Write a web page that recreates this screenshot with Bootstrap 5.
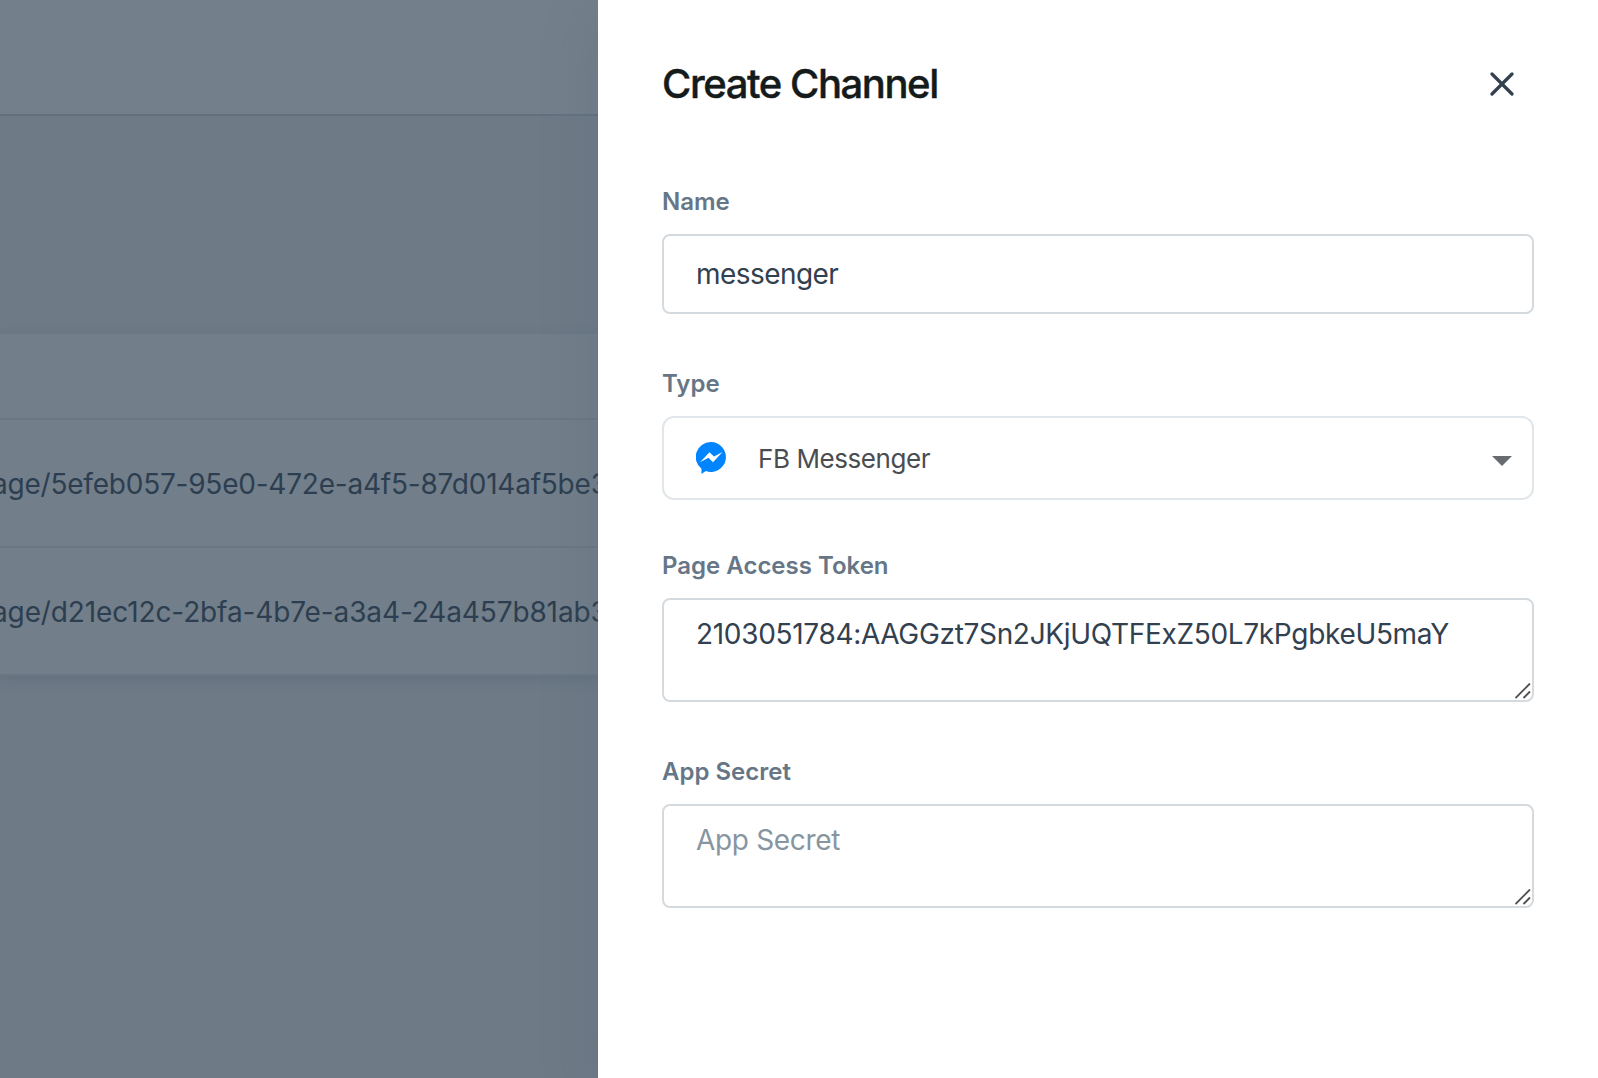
<!DOCTYPE html>
<html lang="en">
<head>
<meta charset="utf-8">
<meta name="viewport" content="width=device-width, initial-scale=1">
<title>Create Channel</title>
<link rel="stylesheet" href="https://cdn.jsdelivr.net/npm/bootstrap@5.3.0/dist/css/bootstrap.min.css">
<style>
  body { font-family: Inter, "Noto Sans", sans-serif; height: 1078px; background: #6e7a86; }
  .page-behind { width: 598px; background: #6e7a86; color: #2c3e50; }
  .top-strip { height: 116px; background: #737f8a; border-bottom: 2px solid #63717f; }
  .list-panel { margin-top: 218px; background: #727e89; box-shadow: 0 4px 12px rgba(60,80,98,.2); }
  .list-head { height: 86px; border-bottom: 2px solid #6a7783; }
  .list-line { height: 128px; padding-top: 2px; font-size: 28px; line-height: 42px; border-bottom: 2px solid #6a7783; }
  .list-line span { margin-left: -8px; }
  .line-one { letter-spacing: -.22px; }
  .line-two { letter-spacing: -.12px; }
  .drawer { width: 1000px; padding: 62px 64px 0; box-shadow: 0 16px 50px rgba(82,100,120,.26); z-index: 1; }
  .drawer-title { font-size: 40px; line-height: 44px; font-weight: 500; letter-spacing: -1.43px; color: #151a1a; -webkit-text-stroke: .4px #151a1a; }
  .close-btn { width: 64px; height: 44px; }
  .form-body { padding-top: 78px; }
  .field { margin-bottom: 52px; }
  .field-type { margin-bottom: 48px; }
  .form-label { font-size: 24px; line-height: 36px; font-weight: 600; color: #66758a; color: #667686; margin-bottom: 14px; display: block; }
  .form-control, .form-control:focus { border: 2px solid #d5dadf; border-radius: 8px; padding: 0 32px; font-size: 28px; line-height: 42px; letter-spacing: -.32px; color: #32404f; box-shadow: none; }
  input.form-control { height: 80px; letter-spacing: -.55px; }
  textarea.form-control { height: 104px; padding-top: 13px; resize: none; overflow: hidden; display: block; }
  .form-control::placeholder { color: #8795a1; opacity: 1; }
  .type-select { height: 84px; border: 2px solid #e1e6ea; border-radius: 12px; padding: 0 20px 0 32px; font-size: 26px; color: #4a4d50; background: #fff; }
  .type-name { margin: 1px 0 0 32px; letter-spacing: -.43px; }
  .caret { margin-top: 6px; }
  .grip { right: 3px; bottom: 3px; }
</style>
<script src="https://cdn.jsdelivr.net/npm/bootstrap@5.3.0/dist/js/bootstrap.bundle.min.js"></script>
</head>
<body class="d-flex overflow-hidden">
  <main class="page-behind flex-shrink-0 overflow-hidden">
    <div class="top-strip"></div>
    <div class="list-panel">
      <div class="list-head"></div>
      <div class="list-line d-flex align-items-center text-nowrap"><span class="line-one">age/5efeb057-95e0-472e-a4f5-87d014af5be3</span></div>
      <div class="list-line d-flex align-items-center text-nowrap"><span class="line-two">age/d21ec12c-2bfa-4b7e-a3a4-24a457b81ab3</span></div>
    </div>
  </main>
  <aside class="drawer bg-white flex-shrink-0 position-relative">
    <header class="d-flex justify-content-between align-items-center">
      <h1 class="drawer-title mb-0">Create Channel</h1>
      <button type="button" class="close-btn btn p-0 border-0 d-flex align-items-center justify-content-center" aria-label="Close">
        <svg width="24" height="24" viewBox="0 0 24 24" fill="none" stroke="#32404f" stroke-width="3.200" stroke-linecap="round"><path d="M2 2 22 22M22 2 2 22"/></svg>
      </button>
    </header>
    <form class="form-body">
      <div class="field">
        <label class="form-label" for="name">Name</label>
        <input class="form-control" id="name" type="text" value="messenger">
      </div>
      <div class="field-type">
        <span class="form-label">Type</span>
        <div class="type-select d-flex align-items-center">
          <svg width="30" height="32" viewBox="0 0 30 32"><path fill="#0084ff" d="M15 0a15 15 0 1 1-5.200 29.100L5.500 32V26.800A15 15 0 0 1 15 0Z"/><path fill="#fff" d="M4 20.300 13.500 10.300 18 14.500 26.500 10 17 20.300 12.500 15.800Z"/></svg>
          <span class="type-name">FB Messenger</span>
          <svg class="caret ms-auto" width="20" height="10" viewBox="0 0 20 10"><path fill="#686c70" d="M0 0H20L10 10Z"/></svg>
        </div>
      </div>
      <div class="field">
        <label class="form-label" for="token">Page Access Token</label>
        <div class="position-relative">
          <textarea class="form-control" id="token" spellcheck="false">2103051784:AAGGzt7Sn2JKjUQTFExZ50L7kPgbkeU5maY</textarea>
          <svg class="grip position-absolute" width="16" height="16" viewBox="0 0 16 16" stroke="#505050" stroke-width="1.900"><path d="M.5 15 15 .5M8.500 15 15 8.500"/></svg>
        </div>
      </div>
      <div class="field">
        <label class="form-label" for="secret">App Secret</label>
        <div class="position-relative">
          <textarea class="form-control" id="secret" placeholder="App Secret"></textarea>
          <svg class="grip position-absolute" width="16" height="16" viewBox="0 0 16 16" stroke="#505050" stroke-width="1.900"><path d="M.5 15 15 .5M8.500 15 15 8.500"/></svg>
        </div>
      </div>
    </form>
  </aside>
</body>
</html>
